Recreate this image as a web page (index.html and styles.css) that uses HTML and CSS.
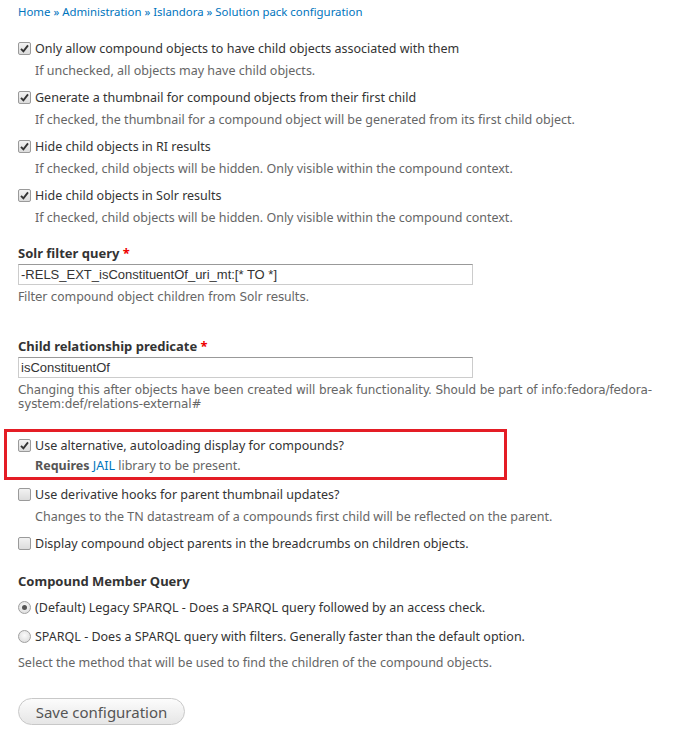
FILE: index.html
```html
<!DOCTYPE html>
<html>
<head>
<meta charset="utf-8">
<link rel="stylesheet" href="styles.css">
</head>
<body>
<div class="page">
  <nav class="breadcrumb"><a href="#">Home</a> » <a href="#">Administration</a> » <a href="#">Islandora</a> » <a href="#">Solution pack configuration</a></nav>

  <div class="item">
    <div class="check-row"><span class="cb checked"><svg viewBox="0 0 13 13" width="13" height="13"><path d="M3 6.8 L5.4 9.3 L10 3.4" fill="none" stroke="#333" stroke-width="1.9"/></svg></span><label>Only allow compound objects to have child objects associated with them</label></div>
    <div class="desc indent">If unchecked, all objects may have child objects.</div>
  </div>
  <div class="item">
    <div class="check-row"><span class="cb checked"><svg viewBox="0 0 13 13" width="13" height="13"><path d="M3 6.8 L5.4 9.3 L10 3.4" fill="none" stroke="#333" stroke-width="1.9"/></svg></span><label>Generate a thumbnail for compound objects from their first child</label></div>
    <div class="desc indent">If checked, the thumbnail for a compound object will be generated from its first child object.</div>
  </div>
  <div class="item">
    <div class="check-row"><span class="cb checked"><svg viewBox="0 0 13 13" width="13" height="13"><path d="M3 6.8 L5.4 9.3 L10 3.4" fill="none" stroke="#333" stroke-width="1.9"/></svg></span><label>Hide child objects in RI results</label></div>
    <div class="desc indent">If checked, child objects will be hidden. Only visible within the compound context.</div>
  </div>
  <div class="item">
    <div class="check-row"><span class="cb checked"><svg viewBox="0 0 13 13" width="13" height="13"><path d="M3 6.8 L5.4 9.3 L10 3.4" fill="none" stroke="#333" stroke-width="1.9"/></svg></span><label>Hide child objects in Solr results</label></div>
    <div class="desc indent">If checked, child objects will be hidden. Only visible within the compound context.</div>
  </div>

  <div class="field first-field">
    <div class="field-label">Solr filter query <span class="req">*</span></div>
    <div class="text-input">-RELS_EXT_isConstituentOf_uri_mt:[* TO *]</div>
    <div class="desc v">Filter compound object children from Solr results.</div>
  </div>

  <div class="field second-field">
    <div class="field-label">Child relationship predicate <span class="req">*</span></div>
    <div class="text-input">isConstituentOf</div>
    <div class="desc v">Changing this after objects have been created will break functionality. Should be part of info:fedora/fedora-system:def/relations-external#</div>
  </div>

  <div class="highlight">
    <div class="check-row"><span class="cb checked"><svg viewBox="0 0 13 13" width="13" height="13"><path d="M3 6.8 L5.4 9.3 L10 3.4" fill="none" stroke="#333" stroke-width="1.9"/></svg></span><label>Use alternative, autoloading display for compounds?</label></div>
    <div class="desc indent"><strong>Requires</strong> <a href="#">JAIL</a> library to be present.</div>
  </div>
  <div class="item">
    <div class="check-row"><span class="cb"></span><label>Use derivative hooks for parent thumbnail updates?</label></div>
    <div class="desc indent">Changes to the TN datastream of a compounds first child will be reflected on the parent.</div>
  </div>
  <div class="item">
    <div class="check-row"><span class="cb"></span><label>Display compound object parents in the breadcrumbs on children objects.</label></div>
  </div>

  <div class="radios">
    <div class="field-label">Compound Member Query</div>
    <div class="radio-row"><span class="rb on"></span><label>(Default) Legacy SPARQL - Does a SPARQL query followed by an access check.</label></div>
    <div class="radio-row"><span class="rb"></span><label>SPARQL - Does a SPARQL query with filters. Generally faster than the default option.</label></div>
    <div class="desc">Select the method that will be used to find the children of the compound objects.</div>
  </div>

  <div class="actions"><button class="btn">Save configuration</button></div>
</div>
</body>
</html>
```

FILE: styles.css
```css
html, body {
  margin: 0;
  padding: 0;
  background: #fff;
}
body {
  font-family: "Noto Sans", "DejaVu Sans", sans-serif;
  font-size: 12px;
  color: #333;
}
.page {
  padding: 4px 0 0 18px;
}
a {
  color: #0074bd;
  text-decoration: none;
}
.breadcrumb {
  color: #0074bd;
  font-size: 11.4px;
  line-height: 16px;
}
.item {
  margin-top: 19px;
}
.item + .item {
  margin-top: 10px;
}
.check-row, .radio-row {
  display: flex;
  align-items: center;
  gap: 4px;
  height: 18px;
  color: #333;
  font-size: 12.5px;
}
.cb {
  width: 13px;
  height: 13px;
  box-sizing: border-box;
  border: 1px solid #9a9a9a;
  border-radius: 2px;
  background: linear-gradient(#f2f2f2, #dcdcdc);
  display: inline-flex;
  flex: none;
}
.cb svg {
  margin: -1px;
}
.rb {
  width: 13px;
  height: 13px;
  box-sizing: border-box;
  border: 1px solid #a0a0a0;
  border-radius: 50%;
  background: radial-gradient(circle at 50% 40%, #fafafa, #d8d8d8);
  position: relative;
  flex: none;
}
.rb.on::after {
  content: "";
  position: absolute;
  left: 3px;
  top: 3px;
  width: 5px;
  height: 5px;
  border-radius: 50%;
  background: #555;
}
.desc {
  color: #666;
  font-size: 12.5px;
  line-height: 14px;
}
.desc.indent {
  margin: 7px 0 0 17px;
}
.desc strong {
  color: #555;
}
.field-label {
  font-weight: bold;
  font-size: 13px;
  line-height: 18px;
  color: #333;
}
.req {
  color: #e00;
}
.field {
  width: 455px;
}
.first-field {
  margin-top: 19px;
}
.second-field {
  margin-top: 33px;
}
.field .field-label {
  white-space: nowrap;
}
.text-input {
  box-sizing: border-box;
  height: 21px;
  border: 1px solid #ccc;
  border-top-color: #999;
  padding: 0 2px;
  font-family: "Liberation Sans", Arial, sans-serif;
  font-size: 13px;
  line-height: 19px;
  color: #333;
  margin-top: 2px;
}
.desc.v {
  margin-top: 5px;
  width: 662px;
  font-family: "DejaVu Sans", Verdana, sans-serif;
  font-size: 12px;
  letter-spacing: -0.1px;
  line-height: 14px;
}
.highlight {
  margin: 18px 0 0 -14px;
  width: 503px;
  box-sizing: border-box;
  border: 3px solid #e41d25;
  padding: 4px 0 4px 11px;
}
.highlight .desc.indent {
  margin-top: 5px;
}
.highlight + .item {
  margin-top: 5px;
}
.radios {
  margin-top: 20px;
}
.radios .field-label {
  margin-bottom: 8px;
}
.radio-row {
  margin-bottom: 11px;
}
.radios .desc {
  margin-top: 0;
}
.actions {
  margin-top: 28px;
}
.btn {
  font-family: "Noto Sans", "DejaVu Sans", sans-serif;
  font-size: 15px;
  color: #555;
  height: 27px;
  width: 167px;
  border: 1px solid #c8c8c8;
  border-radius: 14px;
  background: linear-gradient(#fcfcfc, #e6e6e6);
  padding: 0;
}
```
